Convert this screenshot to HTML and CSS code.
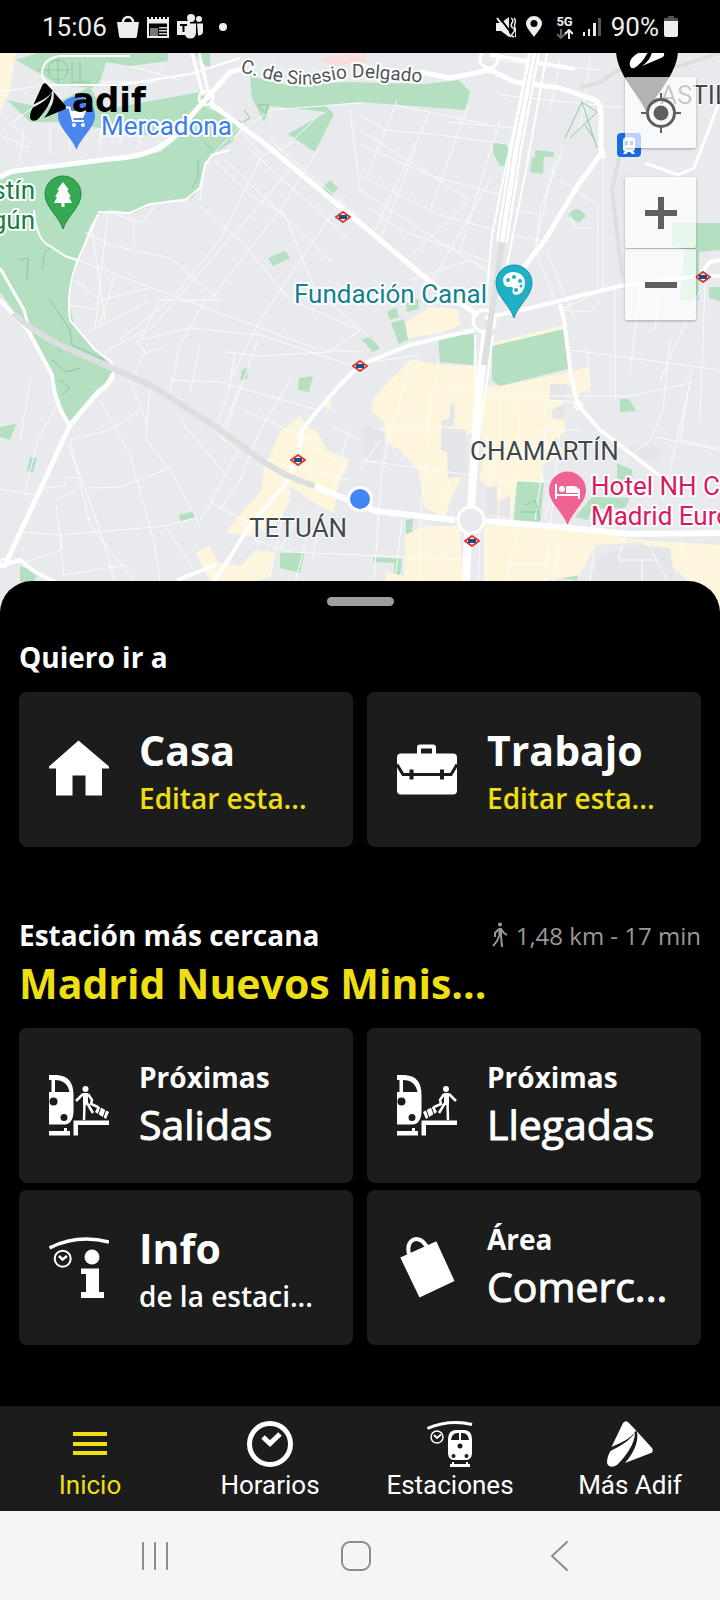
FILE: index.html
```html
<!doctype html>
<html lang="es">
  <head>
    <meta charset="utf-8">
    <meta name="viewport" content="width=device-width, initial-scale=1">
    <title>Adif</title>
    <link rel="stylesheet" href="styles.css">
  </head>
  <body>
    <svg class="defs" width="0" height="0" aria-hidden="true">
      <symbol id="adif" viewBox="0 0 46 46">
        <path d="M16 2Q19 -1.500 22 2L29 9.500C24 18 13 22 4.500 26Z"/>
        <path d="M28 11.500C23 20 12 25.500 3.500 30C1 34 0 38 0 42C1 46.500 7 47 11 43C20 34 28 22 28 11.500Z"/>
        <path d="M25 5L45 27Q47 30.500 44 32L18 42C26 33 32 21 30 11Z"/>
      </symbol>
      <symbol id="metro" viewBox="0 0 16 12">
        <path d="M8 1L15 6L8 11L1 6Z" fill="#fff" stroke="#e03a31" stroke-width="2"/>
        <path d="M4 4h8v4H4z" fill="#1d4f87"/>
      </symbol>
      <symbol id="train" viewBox="0 0 25 61">
        <path fill-rule="evenodd" d="M0 0H8C20 1 24.500 8 24.500 20V37C24.500 45 20 49.500 16 49.500H0V17H2.500V5H0ZM6 5V17H20.500C19 9 14 5 6 5ZM0.500 26.500a4 4 0 1 0 8 0a4 4 0 1 0 -8 0ZM11.500 42.500a3.500 3.500 0 1 0 7 0a3.500 3.500 0 1 0 -7 0Z"/>
        <path d="M0 56H15V53H18V56H21V60.500H0Z"/>
      </symbol>
    </svg>

    <header class="status-bar">
      <div class="status-group">
        <span class="clock">15:06</span>
        <svg width="22" height="24" viewBox="0 0 22 24" fill="#eee">
          <path d="M0 7H22L20 21Q20 23 17 23H5Q2 23 2 21Z"/>
          <path d="M6 9V7a5 5 0 0 1 10 0v2" fill="none" stroke="#eee" stroke-width="2.500"/>
        </svg>
        <svg width="22" height="22" viewBox="0 0 22 22">
          <path d="M1 4V21H21V4Z" fill="none" stroke="#eee" stroke-width="2"/>
          <path d="M1 1v3M5 1v3M9 1v3M13 1v3M17 1v3M21 1v3" stroke="#eee" stroke-width="2"/>
          <path d="M2 6H20" stroke="#eee" stroke-width="3"/>
          <path d="M3 12h8v8H3z" fill="#777"/>
          <path d="M12 11h8v1.500h-8zM12 14h8v1.500h-8zM12 17h8v1.500h-8z" fill="#ccc"/>
        </svg>
        <svg width="26" height="25" viewBox="0 0 26 25" fill="#eee">
          <circle cx="14" cy="4" r="4"/>
          <circle cx="22" cy="5" r="3"/>
          <path d="M20 9.500h6v8q0 4 -5 4zM9 9.500h10v9q0 6 -6 6q-4 0 -5 -4h4z"/>
          <path d="M0 7h13v14H0z"/>
          <path d="M3 11h7M6.500 11v7" stroke="#000" stroke-width="2"/>
        </svg>
        <svg width="34" height="10" viewBox="0 0 34 10"><circle cx="12" cy="5" r="4" fill="#eee"/></svg>
      </div>
      <div class="status-group right">
        <svg width="20" height="22" viewBox="0 0 20 22">
          <path d="M0 7h5l8 -6v20l-8 -6H0z" fill="#eee"/>
          <path d="M3 1L16 18" stroke="#000" stroke-width="2"/>
          <path d="M1 2L15 21" stroke="#eee" stroke-width="2"/>
          <path d="M15 2q3 2 1 5t1 5t0 5t1 4M18 2q2 2 1 5t0 5t1 5t-1 4" fill="none" stroke="#eee" stroke-width="1.500"/>
        </svg>
        <svg class="status-pin" width="16" height="21" viewBox="0 0 16 21">
          <path fill-rule="evenodd" fill="#eee" d="M8 21C3 14 0 11 0 7.500a8 7.500 0 0 1 16 0C16 11 13 14 8 21ZM4.500 7.500a3.500 3.500 0 1 0 7 0a3.500 3.500 0 1 0 -7 0Z"/>
        </svg>
        <span class="network">5G
          <svg width="16" height="10" viewBox="0 0 16 10" fill="none" stroke-width="2">
            <path d="M4 0v9M0 5l4 4l4 -4" stroke="#666"/>
            <path d="M12 10V1M8 5l4 -4l4 4" stroke="#eee"/>
          </svg>
        </span>
        <svg width="18" height="20" viewBox="0 0 18 20">
          <path d="M0 15h2v4H0zM5 12h2v7H5zM10 6h3v13h-3z" fill="#eee"/>
          <path d="M15 1h3v18h-3z" fill="#555"/>
        </svg>
        <span class="battery">90%
          <svg width="14" height="21" viewBox="0 0 14 21">
            <path d="M4 0h6v2h4v5H0V2h4z" fill="#555"/>
            <path d="M0 5h14v14q0 2 -2 2H2q-2 0 -2 -2z" fill="#eee"/>
          </svg>
        </span>
      </div>
    </header>

    <main>
      <section class="map" aria-label="Mapa">
        <svg class="map-canvas" viewBox="0 53 720 558" preserveAspectRatio="xMidYMid slice">
          <path class="land" d="M0 53H720V611H0Z"/>

          <!-- parks -->
          <g class="park">
            <path d="M16 60L38 53H168V61L130 66L106 62L100 82L92 88L58 85L42 75Z"/>
            <path d="M7 100L44 108L90 87L102 110L200 92L213 105L190 118L180 130L150 136L100 128L60 122L30 122Z"/>
            <path d="M195 53H210V68L200 62Z"/>
            <path d="M207 108L243 122L232 142L212 155L205 165L200 188L192 198L170 200L150 205L135 213L110 210L98 214L90 226L75 270L68 300L75 328L95 350L108 362L113 374L98 393L84 406L70 422L55 400L50 376L30 334L0 292V180L15 172L160 152L178 138L190 118Z"/>
            <path d="M250 76L290 86L345 82L425 84L459 80L470 92L465 110L360 102L325 105L334 114L315 152L288 134L327 112L270 106L264 122L252 98Z"/>
            <path d="M321 190L330 180L338 188L331 196ZM268 258L285 251L290 258L273 266ZM242 370L248 367L247 379L240 380Z"/>
            <path d="M299 378L313 376L309 392L298 390ZM0 427L16 424L10 440L0 437ZM30 457L37 458L33 472L27 471Z"/>
            <path d="M179 515L194 511L195 518L180 521ZM280 553L305 552L300 573L280 568ZM20 566L38 572L34 582H20Z"/>
            <path d="M493 142L507 143L509 157L510 166L500 166L493 153ZM535 150L554 152L553 157H535ZM532 158L544 156L543 174L530 172Z"/>
            <path d="M568 216Q576 202 586 216L579 223Z"/>
            <path d="M387 312L396 307L399 317L390 320ZM406 303L418 299L419 309L407 312ZM391 323L404 319L408 340L399 344ZM362 340L371 336L380 348L373 352Z"/>
            <path d="M438 337L475 334L473 365L440 362Z"/>
            <path d="M492 345L564 328L571 368L500 386L492 380Z"/>
            <path d="M672 223H720V250L699 252V300H680L684 250L672 245ZM709 287H720V301L709 298Z"/>
            <path d="M620 399L629 399L636 411L620 412ZM617 463L632 470L633 487L617 485ZM592 497L630 498L625 508L592 509L588 520L575 517Z"/>
            <path d="M517 481L544 483L540 522L514 520ZM512 528L524 529L521 582H510ZM406 520L413 519L412 534H406ZM373 557L402 559L400 577L394 576V563L374 562ZM571 564L579 565L577 580L560 578Z"/>
          </g>

          <!-- commercial zones -->
          <g class="zone">
            <path d="M0 53H16L10 90L0 112Z"/>
            <path d="M406 322L430 307L458 309L461 325L440 333L408 338Z"/>
            <path d="M392 378L412 359L438 365L475 366L476 386L500 386L570 372L588 367L590 390L572 395L571 386L550 384V398L566 402L565 433L554 440L565 452L540 466L545 482L517 481L512 520L486 514L498 495L480 480L484 447L478 430L455 440L460 480L450 500L446 518L425 508L418 470L400 450L386 443L384 422L371 410L374 398Z"/>
            <path d="M405 535L425 526H460L463 582H385L386 572L404 576Z"/>
            <path d="M484 525H552L640 540L720 545V611H680L690 582L670 565L640 542L595 545L580 575L540 582H484Z"/>
            <path d="M268 460L280 432L300 416L308 428L316 430L327 450L350 460L338 485L334 512L322 508L290 486L290 500L280 520L250 536L226 532L240 515L262 490L263 468Z"/>
            <path d="M196 552L209 546L218 562L240 566L256 550L275 552L270 577L250 582H210Z"/>
            <path d="M323 404L333 399L329 411Z"/>
            <path d="M492 343L564 325V329L492 346Z"/>
          </g>
          <path class="block" d="M550 384H567V400H550ZM450 404L455 403L454 426L442 427L441 421L450 418ZM441 428L466 430V476L448 478L447 452L441 450ZM486 488L497 486V502L510 496V518L486 514ZM640 545L670 548L675 582H590L600 555ZM364 425L384 432L380 460H365ZM630 446H660V460H630ZM552 410L566 402L565 420L552 418Z"/>

          <!-- minor streets -->
          <g class="minor">
            <path d="M0 113L28 140M12 122L40 103M20 160L24 130M50 153V125M70 152V130M100 147V128M0 135L30 148M120 145V125M140 143V130M100 82H155L163 66M130 66L180 80M55 86L48 105M0 92L40 86"/>
            <path d="M230 140L270 110L360 103M240 130L262 155L285 148L318 116M215 160L250 195L285 215L315 290L385 350M245 120L205 163L200 200M200 207L240 240L290 300L360 330M262 155L220 240L170 300L120 340M318 150L280 210L210 300M345 195L260 320L230 380M290 170L220 250L150 330M225 160L330 260M250 150L350 240M270 140L358 216M85 232L110 245L170 258L220 300"/>
            <path d="M78 260L190 302L320 350L360 352M92 230L105 320M75 280L100 300L150 288M70 305L100 310M108 212L95 330M115 275L99 327L150 300M134 222V247M118 215L143 223L155 205M140 340L190 328L260 335L350 365L420 355M145 330L105 352M135 338L145 352L130 382L148 425M165 346L140 355M180 345L170 392M200 345L190 392M220 300L160 300L140 340M205 300L180 345M225 352L260 356L330 352L360 330M258 340L240 390L222 440M235 352L228 395L218 420M170 380L220 382L318 410M150 385L146 440L170 470L195 515L200 527M100 400L130 455L155 545L160 582M70 440L90 525L135 582M68 445L78 470L100 530L115 582M0 489L35 495L46 488L64 486L66 477L80 478L90 488L120 487L168 469M22 532L60 535L165 526L195 518M60 540L64 575L126 565M56 505L62 550L25 562M165 526L197 575M75 490L56 500M240 385L228 418L218 435L238 450L210 505L200 520M250 455L300 470M210 502L262 530L280 535M290 380L260 430L240 480L220 510M245 410L310 440M180 420L230 480M110 430L70 440M140 410L110 430M30 382L20 440M60 400L38 440L25 490"/>
            <path d="M360 115L385 130L440 135L515 145M350 110L360 190L500 280M397 100L370 170M430 113L375 230M468 105L430 210M500 120L460 250M360 145L430 175L500 195M360 175L440 215L495 230M370 208L400 230L490 262M380 240L415 150M400 265L470 200M430 285L490 180M360 130L470 200M447 122L515 128M395 105L490 125M410 280L470 260L490 270M350 60L400 75M490 60L600 70M560 60L550 110M590 58L580 130M500 95L625 108"/>
            <path d="M562 150L540 210L536 245M515 210L545 215M510 235L540 240M555 160L535 250L555 300M546 250L575 320M560 180L598 205V290M570 215L575 228H595M603 155V290L560 310M615 290V400M640 290L630 370M660 290L655 330M700 290L660 380M705 285L700 420M565 310L590 312L600 300M571 350L720 370M588 350L590 395M610 355V396M540 396H630L690 383M692 370L680 440L720 448M670 340L663 410L650 440L625 460M690 383L663 500M655 437L720 450M560 430L555 480L545 582M545 400V450L535 520M520 400L516 480M500 395V440M540 430H580M484 395L575 402M438 360L435 390H470M430 390L428 440L420 520V582M410 360L395 420L380 430H440M390 430L382 470L374 580M360 460L470 475M380 440L360 470M470 425L490 440V480L560 482M450 480L440 510M500 480L498 520M554 480L545 520M360 555L470 560M402 520L395 580M480 530L478 582M520 525L505 582M560 530L555 582M625 535L618 560H655M642 560V582M646 540L668 582M680 540L690 582M510 564H545M595 540L590 582"/>
            <path d="M282 518L270 577M305 545L295 582M320 520L312 560M255 540L290 552L360 555M330 425L360 440M345 460L330 495M350 430L340 460M300 440L345 465M290 465L350 480M260 505L290 520M240 520L260 545M300 510L280 550"/>
          </g>

          <!-- paths inside parks -->
          <g class="track">
            <path d="M565 138L582 102L597 112L570 138M582 102L597 148M585 125L595 140M48 70a10 10 0 1 0 20 0a10 10 0 1 0 -20 0M38 70H70M58 58V84M72 62V82H90M80 62V82M50 300L70 330L72 345L105 360M60 340V352M42 270L45 252L50 248M18 260L28 258L27 280M52 360L66 372L80 368M60 380L70 388L62 395M205 142L212 150M244 110L250 118L243 122M258 105L268 104L266 114ZM525 505L535 500L540 520M520 512H538M192 188L198 178V160"/>
          </g>

          <!-- main roads -->
          <g class="avenue">
            <path d="M42 72Q44 58 60 56H130M45 85H120L190 74L240 58M42 72Q42 82 52 87" stroke-width="2"/>
            <path d="M0 178Q5 173 15 171L110 159Q150 157 170 140L205 100L230 72L245 68" stroke-width="5"/>
            <path d="M192 53L203 95M199 53L209 95" stroke-width="3"/>
            <circle cx="206" cy="98" r="7" stroke-width="3"/>
            <path d="M210 103L265 144L360 223L440 290L478 315" stroke-width="5"/>
            <path d="M420 72L450 78L490 70L515 82L560 88L595 100Q602 104 601 120V150L604 158" stroke-width="5"/>
            <path d="M490 55L575 69" stroke-width="4"/>
            <circle cx="489" cy="59" r="9" stroke-width="3"/>
            <path d="M534 53L516 150L502 242" stroke-width="12"/>
            <path class="median" d="M532 53L513 150L499 242M537 53L519 150L505 242" stroke-width="1"/>
            <path d="M527 70L505 170L492 235L486 300M547 53L526 170L512 240L500 300" stroke-width="2"/>
            <path d="M486 330L478 400L471 508M468 532L466 582" stroke-width="8"/>
            <path d="M475 335L476 400M493 335L484 405L478 440" stroke-width="2"/>
            <path d="M604 150L578 185L545 240L518 275" stroke-width="5"/>
            <path d="M485 318L530 308L620 286L690 277L720 276M700 275L710 262L720 260" stroke-width="4"/>
            <circle cx="484" cy="321" r="11" stroke-width="3"/>
            <path d="M474 330L410 345L360 365L340 385L318 410L302 430L298 455L285 485L250 525L225 565L213 582" stroke-width="4"/>
            <path d="M177 580L216 565" stroke-width="4"/>
            <path d="M560 304L564 320L571 375L578 405L600 430L660 476" stroke-width="4"/>
            <circle cx="578" cy="405" r="4" stroke-width="2"/>
            <path d="M312 485L375 511L455 520M485 521L560 527L630 534L720 533" stroke-width="6"/>
            <circle cx="471" cy="520" r="13" stroke-width="3"/>
            <path d="M0 300L28 330L52 375Q55 405 69 424" stroke-width="4"/>
            <path d="M0 268L24 310L28 325" stroke-width="3"/>
            <path d="M113 374Q110 385 98 392L70 425L40 490L5 565" stroke-width="5"/>
            <path d="M0 566L20 560L35 572L55 582" stroke-width="4"/>
            <circle cx="4" cy="563" r="4" stroke-width="2"/>
            <path d="M34 210Q36 240 50 246L65 256L77 260M98 214L77 262Q66 290 70 320L95 350L112 362L113 376M98 212L130 213L150 204L185 200L200 188L205 165L212 155L230 150" stroke-width="2"/>
            <path d="M645 163L678 175L694 168L720 100" stroke-width="3"/>
          </g>
          <path class="tunnel" d="M13 313Q30 330 60 345L150 385Q220 428 250 452T315 486M502 243L484 365" stroke-width="6"/>
          <path class="tunnel" d="M580 88L600 82L625 66H680L720 53M620 155L612 190L622 275" stroke-width="4"/>
          <path d="M318 60L350 53H366V62L335 66Z" fill="#f9dcdc"/>

          <!-- metro stops -->
          <use href="#metro" x="335" y="211" width="16" height="12"/>
          <use href="#metro" x="352" y="360" width="16" height="12"/>
          <use href="#metro" x="290" y="454" width="16" height="12"/>
          <use href="#metro" x="464" y="535" width="16" height="12"/>
          <use href="#metro" x="695" y="271" width="16" height="12"/>

          <path id="sinesio" d="M240 72C265 78 290 87 315 84C335 80 350 76 370 78L440 84" fill="none"/>
          <text class="label street"><textPath href="#sinesio">C. de Sinesio Delgado</textPath></text>
          <text class="label blue" x="101" y="135">Mercadona</text>
          <text class="label green" x="35" y="199" text-anchor="end">stín</text>
          <text class="label green" x="35" y="229" text-anchor="end">gún</text>
          <text class="label teal" x="294" y="303">Fundación Canal</text>
          <text class="label area" x="470" y="460">CHAMARTÍN</text>
          <text class="label area" x="249" y="537">TETUÁN</text>
          <text class="label area" x="643" y="104">CASTILLA</text>
          <text class="label pink" x="591" y="495">Hotel NH C</text>
          <text class="label pink" x="591" y="525">Madrid Euro</text>

          <!-- pins -->
          <path d="M76.500 150C72 137 58 128 58 115a18.500 18.500 0 0 1 37 0C95 128 81 137 76.500 150Z" fill="#4a86f0"/>
          <path d="M70 111H86L83 118H72Z" fill="#fff"/>
          <path d="M66 107.500H69.500L73 121H84" fill="none" stroke="#fff" stroke-width="2"/>
          <circle cx="74" cy="125" r="2" fill="#fff"/><circle cx="83" cy="125" r="2" fill="#fff"/>
          <path d="M63 229C59 216 45 207 45 194a18 18 0 0 1 36 0C81 207 67 216 63 229Z" fill="#35a852" stroke="#24883f"/>
          <path d="M63 182L69 190H67L71 197H69L72 203H64.500V207H61.500V203H54L57 197H55L59 190H57Z" fill="#fff"/>
          <path d="M514 318C510 305 496 296 496 283a18 18 0 0 1 36 0C532 296 518 305 514 318Z" fill="#1fb0c6" stroke="#1593a8"/>
          <path d="M503 279q2 -7 11 -7q11 1 11 12q-1 10 -9 11q-5 -1 -3 -6q0 -3 -4 -2q-6 0 -6 -8Z" fill="#fff"/>
          <g fill="#1fb0c6"><circle cx="508" cy="280" r="2"/><circle cx="514" cy="277" r="2"/><circle cx="520" cy="281" r="2"/><circle cx="521" cy="286" r="1.500"/><circle cx="516" cy="290" r="2"/></g>
          <path d="M567.500 525C563 512 549 503 549 490a18.500 18.500 0 0 1 37 0C586 503 572 512 567.500 525Z" fill="#f06292"/>
          <path d="M556 484V499M579 499V489M555 495H580" stroke="#fff" stroke-width="2"/>
          <circle cx="562" cy="489" r="3" fill="#fff"/>
          <path d="M566 486h8q5 1 5 5v2h-13z" fill="#fff"/>
          <rect x="617" y="133" width="24" height="24" rx="4" fill="#1a6ae0"/>
          <path fill-rule="evenodd" d="M623 140q0 -3 6 -3t6 3v9q0 2 -2 2l2 3h-3l-2 -2h-2l-2 2h-3l2 -3q-2 0 -2 -2zM625 141v4h3v-4zM630 141v4h3v-4z" fill="#fff"/>
          <path d="M647 114C641 96 616 75 616 50a31 31 0 0 1 62 0C678 75 653 96 647 114Z"/>
          <path d="M630 66Q628 58 640 52H648Q642 64 634 68Q631 69 630 66ZM642 66Q650 61 652 52H664Q665 57 661 58Z" fill="#fff"/>
          <circle cx="360" cy="499" r="11.500" fill="#4285f4" stroke="#fff" stroke-width="3"/>
        </svg>

        <div class="brand">
          <svg width="36" height="38" viewBox="0 0 46 46" preserveAspectRatio="none"><use href="#adif"/></svg>
          <span>adif</span>
        </div>
        <div class="map-controls">
          <button class="map-button" type="button" aria-label="Mi ubicación">
            <svg width="40" height="40" viewBox="0 0 40 40" fill="none" stroke="#5f5f5f">
              <circle cx="20" cy="20" r="13.500" stroke-width="3"/>
              <circle cx="20" cy="20" r="7.500" fill="#5f5f5f" stroke="none"/>
              <path d="M20 0V7M20 33V40M0 20H7M33 20H40" stroke-width="2"/>
            </svg>
          </button>
          <div class="zoom">
            <button class="map-button" type="button" aria-label="Acercar">
              <svg width="32" height="32" viewBox="0 0 32 32"><path d="M0 16H32M16 0V32" stroke="#5f5f5f" stroke-width="6"/></svg>
            </button>
            <button class="map-button" type="button" aria-label="Alejar">
              <svg width="32" height="32" viewBox="0 0 32 32"><path d="M0 16H32" stroke="#5f5f5f" stroke-width="6"/></svg>
            </button>
          </div>
        </div>
      </section>

      <section class="sheet">
        <div class="handle"></div>
        <h2 class="heading">Quiero ir a</h2>
        <div class="cards">
          <a class="card" href="#casa">
            <svg class="card-icon" viewBox="0 0 60 60"><path d="M29.500 1L60 27V29H53V56H36.500V36H23.500V56H7V29H0V27Z"/></svg>
            <span class="card-text">
              <strong class="large">Casa</strong>
              <span class="small edit">Editar esta...</span>
            </span>
          </a>
          <a class="card" href="#trabajo">
            <svg class="card-icon" viewBox="0 0 60 60">
              <path fill-rule="evenodd" d="M4 14H20V8Q20 5 23 5H36Q39 5 39 8V14H56Q60 14 60 18V51Q60 55 56 55H4Q0 55 0 51V18Q0 14 4 14ZM24 9V14H35V9Z"/>
              <path d="M0 25L6 35H54L60 25" fill="none" stroke="#1c1c1c" stroke-width="3"/>
              <path d="M14.500 30V40M45 30V40" stroke="#1c1c1c" stroke-width="4"/>
            </svg>
            <span class="card-text">
              <strong class="large">Trabajo</strong>
              <span class="small edit">Editar esta...</span>
            </span>
          </a>
        </div>

        <div class="nearest">
          <h2 class="heading">Estación más cercana</h2>
          <span class="distance">
            <svg width="16" height="26" viewBox="0 0 16 26" fill="none" stroke="#999" stroke-width="2">
              <circle cx="8" cy="2.500" r="2" fill="#999" stroke="none"/>
              <path d="M9 6V14L10 25M7 7L3 11V15M9 7L12 11L15 13M7 14L5 19L1 24"/>
              <path d="M8 6V14" stroke-width="3"/>
            </svg>
            1,48 km - 17 min
          </span>
        </div>
        <p class="station">Madrid Nuevos Minis...</p>
        <div class="cards">
          <a class="card" href="#salidas">
            <svg class="card-icon" viewBox="0 0 60 61">
              <use href="#train" width="25" height="61"/>
              <path d="M25 45.500H60V50H29V60.500H24.500V45.500Z"/>
              <circle cx="36.500" cy="14" r="3"/>
              <path d="M34 18H39V30H34Z"/>
              <path d="M34 19L27 26M39 19L43 25L42 29L49 32M35.500 28L35 45M38 28L44 38" fill="none" stroke="#fff" stroke-width="2.500"/>
              <path d="M49 31L60 37L57 44L46 37Z"/>
              <path d="M52 31L49 40M57 34L54 43" stroke="#1c1c1c" stroke-width="1"/>
            </svg>
            <span class="card-text">
              <strong class="small">Próximas</strong>
              <span class="large">Salidas</span>
            </span>
          </a>
          <a class="card" href="#llegadas">
            <svg class="card-icon" viewBox="0 0 60 61">
              <use href="#train" width="25" height="61"/>
              <path d="M25 45.500H60V50H29V60.500H24.500V45.500Z"/>
              <circle cx="49" cy="14" r="3"/>
              <path d="M47 18H52V30H47Z"/>
              <path d="M52 19L59 26M47 19L43 25L44 29L37 32M50.500 28L51 45M48 28L42 38" fill="none" stroke="#fff" stroke-width="2.500"/>
              <path d="M37 31L26 37L29 44L40 37Z"/>
              <path d="M34 31L37 40M29 34L32 43" stroke="#1c1c1c" stroke-width="1"/>
            </svg>
            <span class="card-text">
              <strong class="small">Próximas</strong>
              <span class="large">Llegadas</span>
            </span>
          </a>
          <a class="card" href="#info">
            <svg class="card-icon" viewBox="0 0 60 61">
              <path d="M0.500 11Q28 -3 60 5" fill="none" stroke="#fff" stroke-width="3.500"/>
              <circle cx="13.700" cy="21.700" r="8" fill="none" stroke="#fff" stroke-width="2"/>
              <path d="M10 19L13.500 22.500L18 19" fill="none" stroke="#fff" stroke-width="2.500"/>
              <circle cx="43" cy="20" r="7.500"/>
              <path d="M32 31.500H50V55H55V61H32V55H37V37H32Z"/>
            </svg>
            <span class="card-text">
              <strong class="large">Info</strong>
              <span class="small">de la estaci...</span>
            </span>
          </a>
          <a class="card" href="#comercial">
            <svg class="card-icon" viewBox="0 0 60 61">
              <path d="M3.300 20.500L39.300 4.300L57.500 44L22.500 60.500Z"/>
              <path d="M12 17C9 4 17 1 22 2.500C27 4 29 8 31 12" fill="none" stroke="#fff" stroke-width="4"/>
            </svg>
            <span class="card-text">
              <strong class="small">Área</strong>
              <span class="large">Comerc...</span>
            </span>
          </a>
        </div>
      </section>
    </main>

    <nav class="tab-bar">
      <a class="tab active" href="#inicio">
        <svg width="46" height="46" viewBox="0 0 46 46"><path d="M6 13H40M6 23H40M6 32H40" stroke="currentColor" stroke-width="4"/></svg>
        Inicio
      </a>
      <a class="tab" href="#horarios">
        <svg width="46" height="46" viewBox="0 0 46 46" fill="none" stroke="currentColor" stroke-width="5">
          <circle cx="23" cy="23" r="20.500"/>
          <path d="M16 16L23 22.500L33 13"/>
        </svg>
        Horarios
      </a>
      <a class="tab" href="#estaciones">
        <svg width="46" height="46" viewBox="0 0 46 46" fill="currentColor">
          <path d="M0.500 7.500Q22 -2 45 3.500" fill="none" stroke="currentColor" stroke-width="3"/>
          <circle cx="10" cy="16" r="6" fill="none" stroke="currentColor" stroke-width="1.500"/>
          <path d="M7 14L10 17L14 13.500" fill="none" stroke="currentColor" stroke-width="2"/>
          <path fill-rule="evenodd" d="M28 9H38Q45 10 45 18V33Q44 39 39 39H27Q22 39 21 33V18Q21 10 28 9ZM24 19H32V12Q25 11 24 19ZM34 12V19H42Q41 11 34 12ZM30.500 25a2.500 2.500 0 1 0 5 0a2.500 2.500 0 1 0 -5 0ZM24.500 35a2 2 0 1 0 4 0a2 2 0 1 0 -4 0ZM37.500 35a2 2 0 1 0 4 0a2 2 0 1 0 -4 0Z"/>
          <path d="M23 43H43V46H23ZM25 41H27V43H25ZM39 41H41V43H39Z"/>
        </svg>
        Estaciones
      </a>
      <a class="tab" href="#mas">
        <svg width="46" height="46" fill="currentColor"><use href="#adif"/></svg>
        Más Adif
      </a>
    </nav>

    <footer class="system-nav">
      <button type="button" aria-label="Recientes">
        <svg width="30" height="30" viewBox="0 0 30 30"><path d="M3 2V28M15 2V28M27 2V28"/></svg>
      </button>
      <button type="button" aria-label="Inicio">
        <svg width="30" height="30" viewBox="0 0 30 30"><rect x="1" y="1" width="28" height="28" rx="8"/></svg>
      </button>
      <button type="button" aria-label="Atrás">
        <svg width="30" height="30" viewBox="0 0 30 30"><path d="M25 1L10 15L25 29"/></svg>
      </button>
    </footer>
  </body>
</html>
```
FILE: styles.css
```css
* {
  box-sizing: border-box;
}

body {
  margin: 0;
  background: #000;
  color: #fff;
  font-family: "Open Sans", "Noto Sans", sans-serif;
}

svg {
  display: block;
  flex-shrink: 0;
}

.defs {
  position: absolute;
}

a {
  color: inherit;
  text-decoration: none;
}

button {
  border: none;
  padding: 0;
  cursor: pointer;
}

/* status bar */

.status-bar {
  display: flex;
  justify-content: space-between;
  align-items: center;
  height: 53px;
  padding: 0 42px;
  color: #eee;
  font: 26px/32px Roboto, sans-serif;
}

.status-group {
  display: flex;
  align-items: center;
  gap: 8px;
}

.right {
  gap: 10px;
}

.clock {
  margin-right: 2px;
}

.status-pin {
  margin-right: 4px;
}

.network {
  display: flex;
  flex-direction: column;
  align-items: center;
  font-size: 13px;
  font-weight: 700;
  line-height: 14px;
}

.battery {
  display: flex;
  align-items: center;
  gap: 5px;
}

/* map */

.map {
  position: relative;
}

.map-canvas {
  width: 100%;
  height: auto;
}

.land {
  fill: #e8eaed;
}

.park {
  fill: #b4dfc0;
}

.zone {
  fill: #fef6dc;
}

.block {
  fill: #e4e6e9;
}

.minor {
  fill: none;
  stroke: #fafbfc;
  stroke-width: 1;
}

.track {
  fill: none;
  stroke: #8fc8a0;
  stroke-width: 1;
}

.avenue {
  fill: none;
  stroke: #fff;
  stroke-linejoin: round;
}

.median {
  stroke: #dfe1e4;
}

.tunnel {
  fill: none;
  stroke: #dddedf;
}

.label {
  font: 26px Roboto, sans-serif;
  paint-order: stroke;
  stroke: #fff;
  stroke-width: 4px;
  stroke-linejoin: round;
}

.street {
  font-size: 19px;
  fill: #50555a;
}

.area {
  fill: #42474c;
  stroke-width: 2px;
}

.blue {
  fill: #3d7de8;
}

.green {
  fill: #188047;
}

.teal {
  fill: #15808f;
}

.pink {
  fill: #d81b60;
}

.brand {
  position: absolute;
  top: 30px;
  left: 30px;
  display: flex;
  gap: 6px;
  color: #000;
  font: bold 34px/34px "DejaVu Sans", sans-serif;
}

.map-controls {
  position: absolute;
  top: 24px;
  right: 24px;
  display: flex;
  flex-direction: column;
  gap: 29px;
}

.map-button {
  display: flex;
  justify-content: center;
  align-items: center;
  width: 71px;
  height: 71px;
  border-radius: 2px;
  background: rgba(255, 255, 255, 0.7);
  box-shadow: 0 1px 3px rgba(0, 0, 0, 0.3);
}

.zoom {
  display: flex;
  flex-direction: column;
  gap: 1px;
}

/* bottom sheet */

.sheet {
  position: relative;
  margin-top: -30px;
  padding: 16px 19px 61px;
  border-radius: 32px 32px 0 0;
  background: #000;
}

.handle {
  width: 67px;
  height: 9px;
  margin: 0 auto 32px;
  border-radius: 5px;
  background: #9e9e9e;
}

.heading {
  margin: 0;
  font-size: 28px;
  font-weight: 700;
  line-height: 38px;
}

.cards {
  display: grid;
  grid-template-columns: 1fr 1fr;
  gap: 7px 14px;
  margin-top: 16px;
}

.card {
  display: flex;
  align-items: center;
  gap: 30px;
  min-width: 0;
  height: 155px;
  padding: 0 24px 0 30px;
  border-radius: 8px;
  background: #1c1c1c;
}

.card-icon {
  width: 60px;
  height: 61px;
  fill: #fff;
}

.card-text {
  display: flex;
  flex-direction: column;
  min-width: 0;
  white-space: nowrap;
}

.large {
  font-size: 41px;
  line-height: 57px;
}

span.large {
  -webkit-text-stroke: 1px currentColor;
}

.small {
  font-size: 28px;
  font-weight: 600;
  line-height: 38px;
}

strong.small {
  font-weight: 700;
}

.edit,
.station {
  color: #eedf12;
}

.nearest {
  display: flex;
  justify-content: space-between;
  align-items: center;
  margin-top: 69px;
}

.distance {
  display: flex;
  align-items: center;
  gap: 8px;
  color: #999;
  font-size: 24px;
}

.station {
  margin: 0;
  font-size: 41px;
  font-weight: 700;
  line-height: 58px;
}

/* tabs */

.tab-bar {
  display: grid;
  grid-template-columns: repeat(4, 1fr);
  background: #1c1c1c;
}

.tab {
  display: flex;
  flex-direction: column;
  align-items: center;
  gap: 2px;
  padding: 15px 0 10px;
  font: 26px/32px Roboto, sans-serif;
}

.active {
  color: #eedf12;
}

/* system navigation */

.system-nav {
  display: grid;
  grid-template-columns: repeat(3, 1fr);
  height: 90px;
  padding: 0 63px 0 55px;
  background: #f5f5f5;
}

.system-nav button {
  display: flex;
  justify-content: center;
  align-items: center;
  background: none;
}

.system-nav svg {
  fill: none;
  stroke: #8c8c8c;
  stroke-width: 2;
  stroke-linecap: round;
}
```
